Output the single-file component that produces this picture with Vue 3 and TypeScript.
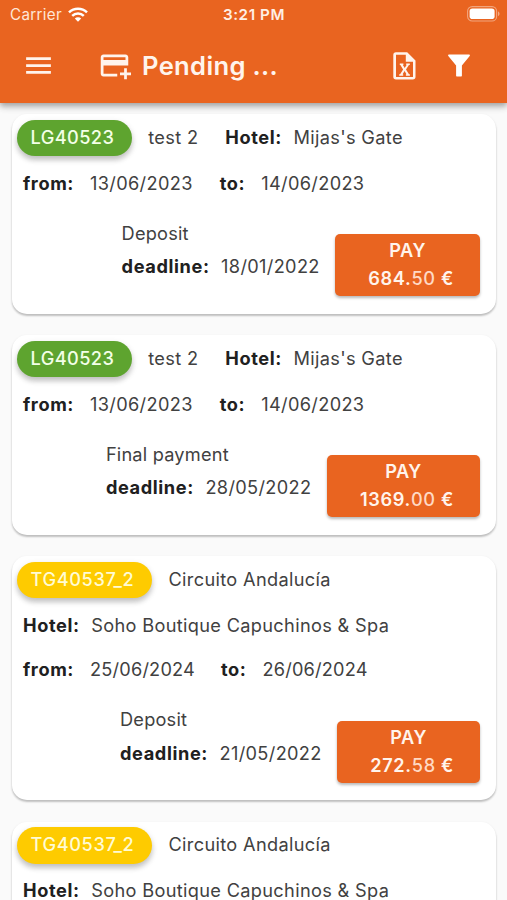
<script setup lang="ts">
interface Payment {
  code: string
  tone: 'green' | 'amber'
  title: string
  hotel: string
  wide: boolean
  from: string
  to: string
  kind: string
  deadline: string
  units: string
  cents: string
}

const payments: Payment[] = [
  { code: 'LG40523', tone: 'green', title: 'test 2', hotel: "Mijas's Gate", wide: false, from: '13/06/2023', to: '14/06/2023', kind: 'Deposit', deadline: '18/01/2022', units: '684.', cents: '50' },
  { code: 'LG40523', tone: 'green', title: 'test 2', hotel: "Mijas's Gate", wide: false, from: '13/06/2023', to: '14/06/2023', kind: 'Final payment', deadline: '28/05/2022', units: '1369.', cents: '00' },
  { code: 'TG40537_2', tone: 'amber', title: 'Circuito Andalucía', hotel: 'Soho Boutique Capuchinos & Spa', wide: true, from: '25/06/2024', to: '26/06/2024', kind: 'Deposit', deadline: '21/05/2022', units: '272.', cents: '58' },
  { code: 'TG40537_2', tone: 'amber', title: 'Circuito Andalucía', hotel: 'Soho Boutique Capuchinos & Spa', wide: true, from: '25/06/2024', to: '26/06/2024', kind: 'Final payment', deadline: '25/05/2024', units: '272.', cents: '58' },
]
</script>

<template>
  <div class="screen">
    <header class="header">
      <div class="status">
        <div class="carrier">
          <span>Carrier</span>
          <svg class="wifi" viewBox="0 0 20 15" fill="none" stroke="currentColor">
            <path d="M1 5.4a13 13 0 0 1 18 0" stroke-width="2.5" />
            <path d="M4.2 8.9a8.4 8.4 0 0 1 11.6 0" stroke-width="2.5" />
            <path d="M10 14.7 6.8 11.5a4.6 4.6 0 0 1 6.4 0z" fill="currentColor" stroke="none" />
          </svg>
        </div>
        <span class="clock">3:21 PM</span>
        <svg class="battery" viewBox="0 0 33 16">
          <rect x="0.6" y="0.6" width="29" height="14.4" rx="4.6" fill="none" stroke="#fff" stroke-opacity="0.42" stroke-width="1.1" />
          <rect x="2.6" y="2.6" width="25" height="10.4" rx="2.8" fill="#fff" />
          <path d="M31 5.6c2 .7 2 3.8 0 4.5z" fill="#fff" fill-opacity="0.45" />
        </svg>
      </div>
      <div class="toolbar">
        <svg class="icon menu" viewBox="0 0 24 24"><path d="M3 18h18v-2H3v2zm0-5h18v-2H3v2zm0-7v2h18V6H3z" /></svg>
        <svg class="icon" viewBox="0 0 24 24">
          <path d="M20 4H4c-1.11 0-1.99.89-1.99 2L2 18c0 1.11.89 2 2 2h10v-2H4v-6h18V6c0-1.11-.89-2-2-2zm0 4H4V6h16v2zm4 9v2h-3v3h-2v-3h-3v-2h3v-3h2v3h3z" />
        </svg>
        <h1>Pending ...</h1>
        <svg class="file" viewBox="0 0 23 28">
          <path fill-rule="evenodd" d="M3 .3h11.2L22.5 8.4v16.4a2.7 2.7 0 0 1-2.7 2.7H3A2.7 2.7 0 0 1 .3 24.8V3A2.7 2.7 0 0 1 3 .3zM3 2.7v22.4h17V9.8h-7.2v-7.1z" />
          <path d="M6.8 11.6h3.6v1.5h-.5l1.8 3 1.9-3h-.4v-1.5h3.6v1.5h-.9l-2.9 4.4 3 4.7h.9v1.5h-4v-1.5h.6l-1.9-3.3-2 3.3h.6v1.5h-4v-1.5h.9l3-4.7-2.7-4.4h-.6z" />
        </svg>
        <svg class="funnel" viewBox="0 0 22 23"><path d="M.9.4h20.2c.8 0 1.1.9.6 1.5L13.9 11.4v10.1c0 .8-.3 1.1-1 1.1H9.2c-.8 0-1.1-.4-1.1-1.1V11.4L.3 1.9C-.2 1.3.1.4.9.4z" /></svg>
      </div>
    </header>

    <main class="list">
      <article v-for="(p, i) in payments" :key="i" class="card" :class="{ wide: p.wide }">
        <div class="heading">
          <span class="pill" :class="p.tone">{{ p.code }}</span>
          <span class="title">{{ p.title }}</span>
          <template v-if="!p.wide">
            <b class="inline-label">Hotel:</b>
            <span class="value">{{ p.hotel }}</span>
          </template>
        </div>
        <div v-if="p.wide" class="row">
          <b>Hotel:</b>
          <span class="value">{{ p.hotel }}</span>
        </div>
        <div class="row">
          <b class="from">from:</b>
          <span class="value date">{{ p.from }}</span>
          <b class="to">to:</b>
          <span class="value date">{{ p.to }}</span>
        </div>
        <div class="payment">
          <div class="due">
            <div class="line kind">{{ p.kind }}</div>
            <div class="line"><b>deadline:</b><span class="value">{{ p.deadline }}</span></div>
          </div>
          <button class="pay" type="button">
            <span>PAY</span>
            <span class="amount">{{ p.units }}<span class="cents">{{ p.cents }}</span> €</span>
          </button>
        </div>
      </article>
    </main>
  </div>
</template>

<style>
body {
  margin: 0;
  background: #fafafa;
}
</style>

<style scoped>
.screen {
  height: 900px;
  overflow: hidden;
  display: flex;
  flex-direction: column;
  background: #fafafa;
  color: #414141;
  font-family: Inter, "Liberation Sans", sans-serif;
  font-size: 18.2px;
  letter-spacing: 0.33px;
  white-space: nowrap;
}
.header {
  position: relative;
  z-index: 1;
  flex: none;
  height: 103px;
  background: #e96420;
  color: #fff;
  box-shadow: 0 2px 5px rgba(0, 0, 0, 0.2), 0 5px 6px rgba(0, 0, 0, 0.13), 0 1px 10px rgba(0, 0, 0, 0.12);
}
.status {
  display: grid;
  grid-template-columns: 1fr auto 1fr;
  align-items: center;
  height: 29px;
  padding: 0 7px 0 10px;
  font-size: 15.2px;
  line-height: 18px;
}
.carrier {
  display: flex;
  align-items: center;
  gap: 6px;
  color: #ffe6d6;
}
.wifi {
  width: 20px;
  height: 15px;
  color: #fff;
}
.clock {
  margin-left: -2px;
  font-weight: 600;
  letter-spacing: 0.6px;
  color: #fff0e5;
}
.battery {
  width: 33px;
  height: 16px;
  margin-top: -1px;
  justify-self: end;
}
.toolbar {
  display: flex;
  align-items: center;
  height: 73px;
  padding: 0 37.5px 0 22px;
  fill: #fff4ec;
}
.icon {
  width: 33px;
  height: 33px;
}
.menu {
  margin-right: 43px;
}
h1 {
  flex: 1;
  margin: 0 0 0 11px;
  font-size: 25.6px;
  line-height: 32px;
  font-weight: 600;
  color: #fff4ec;
}
.file {
  width: 23px;
  height: 28px;
  margin-right: 32px;
}
.funnel {
  width: 22px;
  height: 23px;
  fill: #fff;
}
.list {
  display: flex;
  flex-direction: column;
  gap: 21.5px;
  padding: 11px 11px 0 12px;
}
.card {
  flex: none;
  padding: 5.5px 16px 17.5px 11px;
  border-radius: 15px;
  background: #fff;
  box-shadow: 0 2px 2px rgba(0, 0, 0, 0.2), 0 1px 3px rgba(0, 0, 0, 0.08);
}
b {
  font-weight: 700;
  letter-spacing: 0.6px;
  color: #202020;
}
.heading {
  display: flex;
  align-items: flex-start;
  height: 36.5px;
  margin: 0 0 15.5px -6px;
  line-height: 35px;
}
.pill {
  padding: 0 17.5px 1.5px 13.5px;
  border-radius: 19px;
  font-weight: 500;
  letter-spacing: 0.4px;
  box-shadow: 0 4px 5px rgba(0, 0, 0, 0.14), 0 3px 7px rgba(0, 0, 0, 0.14);
}
.green {
  background: #5ea42f;
  color: #f3ffe7;
}
.amber {
  background: #fecb00;
  color: #fffbd4;
  letter-spacing: 0.62px;
}
.title {
  margin-left: 16.5px;
}
.inline-label {
  margin-left: 27px;
}
.value {
  margin-left: 11.5px;
}
.row {
  display: flex;
  align-items: flex-start;
  height: 24px;
  margin-bottom: 20.5px;
  line-height: 22px;
}
.from + .value {
  margin-left: 16px;
}
.to {
  margin-left: 27px;
}
.to + .value {
  margin-left: 16px;
}
.wide .date {
  letter-spacing: 0.18px;
}
.wide .to {
  margin-left: 26px;
}
.payment {
  display: flex;
  justify-content: flex-end;
  align-items: flex-end;
  height: 80px;
}
.due {
  align-self: flex-start;
  margin-right: 0.5px;
}
.line {
  line-height: 34px;
}
.line:last-child {
  margin-top: -0.5px;
}
.kind {
  margin-top: -0.5px;
  letter-spacing: 0.2px;
}
.pay {
  display: flex;
  flex-direction: column;
  align-items: center;
  height: 62px;
  box-sizing: border-box;
  justify-content: flex-start;
  margin: 0 0 0 15px;
  padding: 2px 26px 4px;
  border: 0;
  border-radius: 5px;
  background: #e96420;
  color: #fff4ec;
  font: inherit;
  font-weight: 600;
  letter-spacing: 0.5px;
  line-height: 28px;
  box-shadow: 0 2px 3px rgba(0, 0, 0, 0.28);
}
.amount {
  padding-left: 7px;
  letter-spacing: 0.65px;
}
.cents {
  font-weight: 500;
  color: #ffd9c4;
}
</style>
